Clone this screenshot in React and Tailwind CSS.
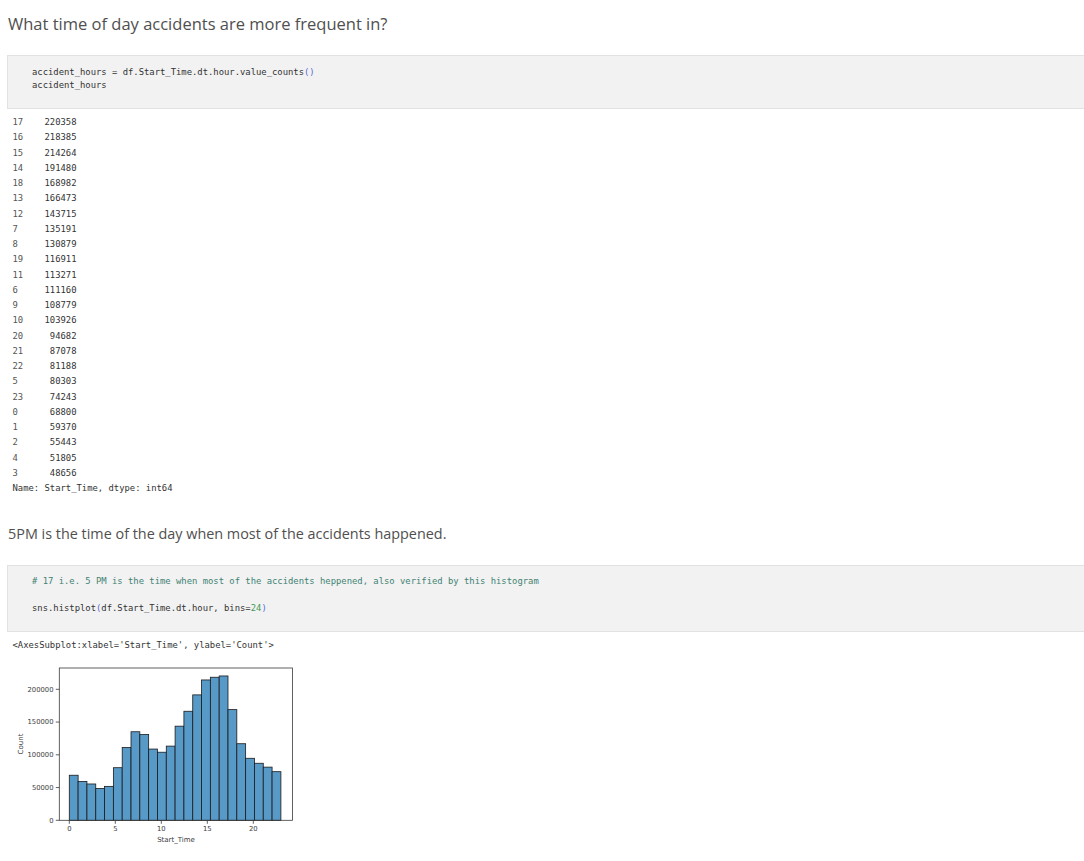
const hourCounts = [
  [17, 220358], [16, 218385], [15, 214264], [14, 191480], [18, 168982],
  [13, 166473], [12, 143715], [7, 135191], [8, 130879], [19, 116911],
  [11, 113271], [6, 111160], [9, 108779], [10, 103926], [20, 94682],
  [21, 87078], [22, 81188], [5, 80303], [23, 74243], [0, 68800],
  [1, 59370], [2, 55443], [4, 51805], [3, 48656],
];

const mono = { fontFamily: '"DejaVu Sans Mono", "Liberation Mono", monospace' };

function Histogram() {
  const byHour = [...hourCounts].sort((a, b) => a[0] - b[0]).map((r) => r[1]);
  const xs = (h) => 69.3 + 9.2 * h;
  const ys = (v) => 820.3 - v * 0.000655;
  const binW = 23 / 24;

  return (
    <svg width="310" height="200" viewBox="0 655 310 200" className="block">
      {byHour.map((v, k) => (
        <rect
          key={k}
          x={xs(k * binW)}
          y={ys(v)}
          width={xs((k + 1) * binW) - xs(k * binW)}
          height={820.3 - ys(v)}
          fill="#5799c7"
          stroke="#1a1a1a"
          strokeWidth="0.8"
        />
      ))}
      <rect x="59.3" y="668" width="233.2" height="152.3" fill="none" stroke="#3a3a3a" strokeWidth="0.8" />

      {[0, 50000, 100000, 150000, 200000].map((v) => (
        <g key={v}>
          <line x1="55.8" x2="59.3" y1={ys(v)} y2={ys(v)} stroke="#3a3a3a" strokeWidth="0.8" />
          <text x="53.5" y={ys(v) + 2.3} textAnchor="end" fontSize="6.8" fill="#3c3c3c" fontFamily="DejaVu Sans, sans-serif">
            {v}
          </text>
        </g>
      ))}
      {[0, 5, 10, 15, 20].map((h) => (
        <g key={h}>
          <line x1={xs(h)} x2={xs(h)} y1="820.3" y2="823.8" stroke="#3a3a3a" strokeWidth="0.8" />
          <text x={xs(h)} y="830.5" textAnchor="middle" fontSize="6.8" fill="#3c3c3c" fontFamily="DejaVu Sans, sans-serif">
            {h}
          </text>
        </g>
      ))}
      <text x="176" y="841.5" textAnchor="middle" fontSize="7" fill="#3c3c3c" fontFamily="DejaVu Sans, sans-serif">
        Start_Time
      </text>
      <text
        x="22.5"
        y="744"
        textAnchor="middle"
        fontSize="7"
        fill="#3c3c3c"
        fontFamily="DejaVu Sans, sans-serif"
        transform="rotate(-90 22.5 744)"
      >
        Count
      </text>
    </svg>
  );
}

export default function App() {
  return (
    <div className="w-[1084px] min-h-[861px] bg-white overflow-hidden" style={{ fontFamily: '"Open Sans", "Noto Sans", sans-serif' }}>
      {/* Markdown heading */}
      <div className="h-[55px] pl-[8px] pt-[12px] text-[16.5px] leading-[24px] text-[#4f4f4f]">
        What time of day accidents are more frequent in?
      </div>

      {/* Code cell 1 */}
      <div className="ml-[7px] h-[54px] bg-[#f2f2f2] border border-r-0 border-[#e2e2e2]">
        <pre className="pl-[24px] pt-[9.5px] text-[8.87px] leading-[13.5px] text-[#333]" style={mono}>
          {'accident_hours = df.Start_Time.dt.hour.value_counts'}
          <span className="text-[#5c6bd6]">()</span>
          {'\naccident_hours'}
        </pre>
      </div>

      {/* Output */}
      <pre className="pl-[12.5px] pt-[6.2px] h-[386px] text-[8.87px] leading-[15.25px] text-[#333]" style={mono}>
        {hourCounts.map(([h, v]) => (
          <div key={h}>
            <span className="text-[#555]">{String(h).padEnd(2, ' ')}</span>
            {'    ' + String(v).padStart(6, ' ')}
          </div>
        ))}
        <div>Name: Start_Time, dtype: int64</div>
      </pre>

      <div className="mt-[27px] pl-[8px] text-[14.4px] leading-[24px] text-[#4f4f4f]">
        5PM is the time of the day when most of the accidents happened.
      </div>

      {/* Code cell 2 */}
      <div className="mt-[19px] ml-[7px] h-[67px] bg-[#f2f2f2] border border-r-0 border-[#e2e2e2]">
        <pre className="pl-[24px] pt-[8.5px] text-[8.87px] leading-[13.5px] text-[#333]" style={mono}>
          <span className="text-[#3f8272]">
            # 17 i.e. 5 PM is the time when most of the accidents heppened, also verified by this histogram
          </span>
          {'\n\nsns.histplot'}
          <span className="text-[#5c6bd6]">(</span>
          {'df.Start_Time.dt.hour, bins='}
          <span className="text-[#3f9a55]">24</span>
          <span className="text-[#5c6bd6]">)</span>
        </pre>
      </div>

      <div className="h-[23px] pl-[12.5px] pt-[5.5px] text-[8.87px] leading-[15px] text-[#333]" style={mono}>
        {"<AxesSubplot:xlabel='Start_Time', ylabel='Count'>"}
      </div>

      <Histogram />
    </div>
  );
}
